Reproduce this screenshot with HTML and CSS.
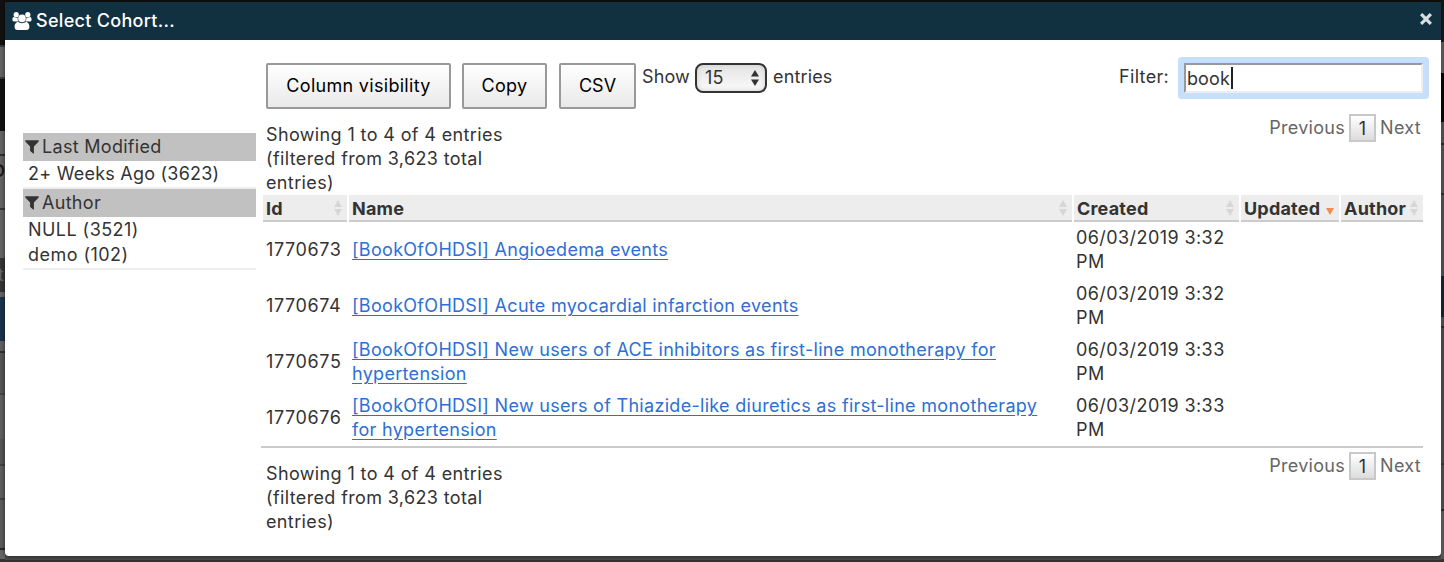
FILE: index.html
```
<!DOCTYPE html>
<html lang="en">
<head>
<meta charset="utf-8">
<title>Select Cohort</title>
<link rel="stylesheet" href="styles.css">
</head>
<body>
<div class="page-edge page-edge-left"><span class="peek peek-o">o</span><span class="peek peek-t">t</span></div>
<div class="modal">
  <header class="modal-header">
    <svg class="icon-users" viewBox="0 0 20 18" width="20" height="18" fill="#fff">
      <circle cx="4.2" cy="2.7" r="2.6"/><circle cx="15.8" cy="2.7" r="2.6"/>
      <circle cx="10" cy="6.4" r="3.8"/>
      <path d="M5.7 5.6C5.4 7.1 5.8 8.5 6.7 9.6H3.2C1.2 9.6.4 8.9.4 7.7.4 6.1 1 4.9 2 5.1c1.2.8 2.7 1 3.7.5zM14.3 5.6c.3 1.5-.1 2.9-1 4h3.5c2 0 2.8-.7 2.8-1.9 0-1.6-.6-2.8-1.6-2.6-1.2.8-2.7 1-3.7.5z"/>
      <path d="M6.2 10c2 1.5 5.6 1.5 7.6 0 2.500 0 3.600 2.400 3.600 5 0 1.900-1.100 3-2.900 3H5.500c-1.800 0-2.900-1.100-2.900-3 0-2.600 1.100-5 3.600-5z"/>
    </svg>
    <span class="modal-title">Select Cohort...</span>
    <svg class="icon-close" viewBox="0 0 12 12" width="12" height="12"><path d="M2.200 2.200 9.800 9.800M9.800 2.200 2.200 9.800" stroke="#d8dfe1" stroke-width="3.200" stroke-linecap="square"/></svg>
  </header>
  <div class="modal-body">
    <aside class="facets">
      <section class="facet">
        <h2 class="facet-title"><svg class="icon-filter" viewBox="0 0 14 14" width="14" height="14"><path d="M.3.300h13.400v1.200L8.900 6.600V14L5.100 11V6.600L.3 1.500z" fill="#333"/></svg><span>Last Modified</span></h2>
        <div class="facet-item facet-weeks">2+ Weeks Ago (3623)</div>
      </section>
      <section class="facet">
        <h2 class="facet-title"><svg class="icon-filter" viewBox="0 0 14 14" width="14" height="14"><path d="M.3.300h13.400v1.200L8.900 6.600V14L5.100 11V6.600L.3 1.500z" fill="#333"/></svg><span>Author</span></h2>
        <div class="facet-item">NULL (3521)</div>
        <div class="facet-item">demo (102)</div>
      </section>
    </aside>
    <main class="results">
      <div class="toolbar">
        <button class="btn btn-cols">Column visibility</button>
        <button class="btn btn-copy">Copy</button>
        <button class="btn btn-csv">CSV</button>
        <div class="length"><span>Show</span>
          <span class="select"><span>15</span><svg viewBox="0 0 8 16" width="8" height="16" fill="#333"><path d="M4 0l4 6.500H0zM4 16l4-6.500H0z"/></svg></span>
          <span>entries</span></div>
        <label class="filter"><span>Filter:</span><span class="input">book<i class="caret"></i></span></label>
      </div>
      <div class="info-row info-top">
        <p class="info">Showing 1 to 4 of 4 entries<br>(filtered from 3,623 total<br>entries)</p>
        <nav class="pager"><span>Previous</span><span class="current">1</span><span>Next</span></nav>
      </div>
      <table class="grid">
        <colgroup><col class="c-id"><col class="c-name"><col class="c-created"><col class="c-updated"><col class="c-author"></colgroup>
        <thead><tr>
          <th><div>Id<svg class="sort" viewBox="0 0 8 16" width="8" height="16"><path d="M4 0l4 7H0zM4 16l4-7H0z"/></svg></div></th>
          <th><div>Name<svg class="sort" viewBox="0 0 8 16" width="8" height="16"><path d="M4 0l4 7H0zM4 16l4-7H0z"/></svg></div></th>
          <th><div>Created<svg class="sort" viewBox="0 0 8 16" width="8" height="16"><path d="M4 0l4 7H0zM4 16l4-7H0z"/></svg></div></th>
          <th><div>Updated<svg class="sort sorted" viewBox="0 0 8 16" width="8" height="16"><path d="M4 15l4-7H0z"/></svg></div></th>
          <th><div>Author<svg class="sort" viewBox="0 0 8 16" width="8" height="16"><path d="M4 0l4 7H0zM4 16l4-7H0z"/></svg></div></th>
        </tr></thead>
        <tbody>
          <tr><td>1770673</td><td><a>[BookOfOHDSI] Angioedema events</a></td><td>06/03/2019 3:32<br>PM</td><td></td><td></td></tr>
          <tr><td>1770674</td><td><a>[BookOfOHDSI] Acute myocardial infarction events</a></td><td>06/03/2019 3:32<br>PM</td><td></td><td></td></tr>
          <tr><td>1770675</td><td><a>[BookOfOHDSI] New users of ACE inhibitors as first-line monotherapy for<br>hypertension</a></td><td>06/03/2019 3:33<br>PM</td><td></td><td></td></tr>
          <tr><td>1770676</td><td><a>[BookOfOHDSI] New users of Thiazide-like diuretics as first-line monotherapy<br>for hypertension</a></td><td>06/03/2019 3:33<br>PM</td><td></td><td></td></tr>
        </tbody>
      </table>
      <div class="info-row info-bottom">
        <p class="info">Showing 1 to 4 of 4 entries<br>(filtered from 3,623 total<br>entries)</p>
        <nav class="pager"><span>Previous</span><span class="current">1</span><span>Next</span></nav>
      </div>
    </main>
  </div>
</div>
<div class="page-edge page-edge-right"></div>
</body>
</html>
```
FILE: styles.css
```
* { box-sizing: border-box; }
body {
  margin: 0; width: 1444px; height: 562px; overflow: hidden;
  display: flex; align-items: stretch; padding-top: 2px;
  background: linear-gradient(#111 0 2px, #4a4a4a 2px 560px, #333 560px);
  font: 18px/24px Inter, "Liberation Sans", sans-serif; color: #333;
}
.page-edge { flex: none; margin-top: -2px; position: relative; overflow: hidden; }
.page-edge-left {
  width: 5px;
  background: linear-gradient(#111 0 45px, #3a3a3a 45px 47px, #656565 47px 77px, #3a3a3a 77px 79px, #111 79px 131px, #656565 131px 154px, #303030 154px 156px, #656565 156px 208px, #383838 208px 210px, #656565 210px 258px, #363636 258px 292px, #656565 292px 297px, #1d334d 297px 341px, #626262 341px 351px, #303030 351px 353px, #575757 353px 393px, #484848 393px 395px, #606060 395px 439px, #565656 439px 464px, #424242 464px 466px, #5f5f5f 466px 498px, #424242 498px 500px, #5c5c5c 500px 548px, #282828 548px 550px, #666 550px 559px, #333 559px);
}
.page-edge-right {
  width: 3px;
  background: linear-gradient(#151515 0 42px, #555 42px 73px, #050505 73px 122px, #4d4d4d 122px 143px, #262626 143px 145px, #4d4d4d 145px 193px, #2c2c2c 193px 195px, #4a4a4a 195px 276px, #152236 276px 317px, #4b4b4b 317px 326px, #292929 326px 328px, #454545 328px 463px, #333 463px 465px, #484848 465px 509px, #262626 509px 511px, #555 511px 559px, #333 559px);
}
.peek { position: absolute; line-height: 20px; }
.peek-o { left: -9px; top: 159px; font-size: 24px; color: #171717; }
.peek-t { left: -2px; top: 265px; color: #666; }

.modal { width: 1436px; height: 554px; background: #fff; border-radius: 0 0 4px 4px; box-shadow: 0 0 5px rgba(0,0,0,.6); position: relative; }
.modal-header { height: 38px; background: #113040; display: flex; align-items: center; padding: 0 9px 0 7px; color: #fff; }
.icon-users { margin-right: 4px; }
.modal-title { flex: 1; font-weight: 500; letter-spacing: .3px; }
.icon-close { margin-bottom: 4px; }
.modal-body { display: flex; padding: 0 18px; }

.facets { width: 233px; padding-top: 93px; margin-right: 5px; letter-spacing: .3px; }
.facet { border-bottom: 2px solid #eee; }
.facet-title { margin: 0; height: 28px; background: #c1c1c1; font: inherit; display: flex; align-items: center; gap: 3px; padding-left: 2px; }
.facet-item { height: 25px; line-height: 26px; padding-left: 5px; letter-spacing: .45px; }
.facet-item.facet-weeks { height: 26px; letter-spacing: .23px; }
.facet + .facet { padding-bottom: 1px; }

.results { width: 1162px; letter-spacing: .3px; }
.toolbar { display: flex; align-items: flex-start; height: 83px; padding: 23px 0 0 5px; }
.btn { height: 46px; padding: 0; border: 2px solid #999; border-radius: 2px; background: linear-gradient(#fff, #e9e9e9); font: inherit; letter-spacing: inherit; color: #000; }
.btn-cols { width: 185px; margin-right: 11px; }
.btn-copy { width: 85px; margin-right: 12px; }
.btn-csv { width: 77px; margin-right: 6px; letter-spacing: 0; }
.length { display: flex; align-items: center; height: 30px; gap: 6px; letter-spacing: .15px; }
.length > span:first-child, .length > span:last-child { padding-bottom: 3px; }
.length > span:first-child { width: 47px; }
.select { width: 72px; height: 30px; border: 2px solid #333; border-radius: 8px; background: linear-gradient(#e4e4e4, #fafafa); box-shadow: inset 0 0 5px #ccc; display: flex; align-items: center; justify-content: space-between; padding: 0 6px 0 8px; }
.filter { margin-left: auto; display: flex; align-items: flex-start; gap: 15px; line-height: 27px; }
.input { width: 239px; height: 30px; border: 2px solid; border-color: #999 #eee #eee #999; box-shadow: 0 0 0 6px #c5dffc; border-radius: 1px; background: #fff; padding-left: 1px; display: flex; align-items: center; letter-spacing: .1px; }
.caret { width: 2px; height: 22px; background: #222; margin-left: 1px; }

.info-row { display: flex; justify-content: space-between; align-items: flex-start; padding-left: 5px; }
.info-top { height: 72px; }
.info { margin: 0; letter-spacing: .37px; }
.pager { display: flex; align-items: center; gap: 4px; padding-right: 2px; color: #666; }
.current { width: 27px; height: 28px; line-height: 25px; border: 2px solid #c8c8c8; background: linear-gradient(#fff, #dcdcdc); text-align: center; color: #333; }
.info-top .pager { margin-top: -9px; }
.info-bottom { padding-top: 14px; }
.info-bottom .pager { margin-top: -10px; }

.grid { width: 1162px; table-layout: fixed; border-collapse: separate; border-spacing: 0; border-bottom: 2px solid #ccc; }
.c-id { width: 86px; }
.c-name { width: 725px; }
.c-created { width: 167px; }
.c-updated { width: 100px; }
.c-author { width: 84px; }
th { padding: 0; height: 27px; text-align: left; background: #ededed; border-left: 2px solid #fff; }
th div { height: 27px; line-height: 28px; border-bottom: 2px solid #ccc; padding: 2px 5px 0 3px; display: flex; justify-content: space-between; align-items: center; letter-spacing: .2px; }
.sort { fill: #d6d6d6; flex: none; position: relative; top: -1px; }
.sorted { fill: #f08c50; }
td { height: 56px; padding: 0 4px 0 5px; vertical-align: middle; white-space: nowrap; }
td:first-child { letter-spacing: .6px; }
td:nth-child(3) { padding-left: 4px; letter-spacing: .42px; }
td a { color: #2d6fd6; text-decoration: underline; text-underline-offset: 3px; }
```
